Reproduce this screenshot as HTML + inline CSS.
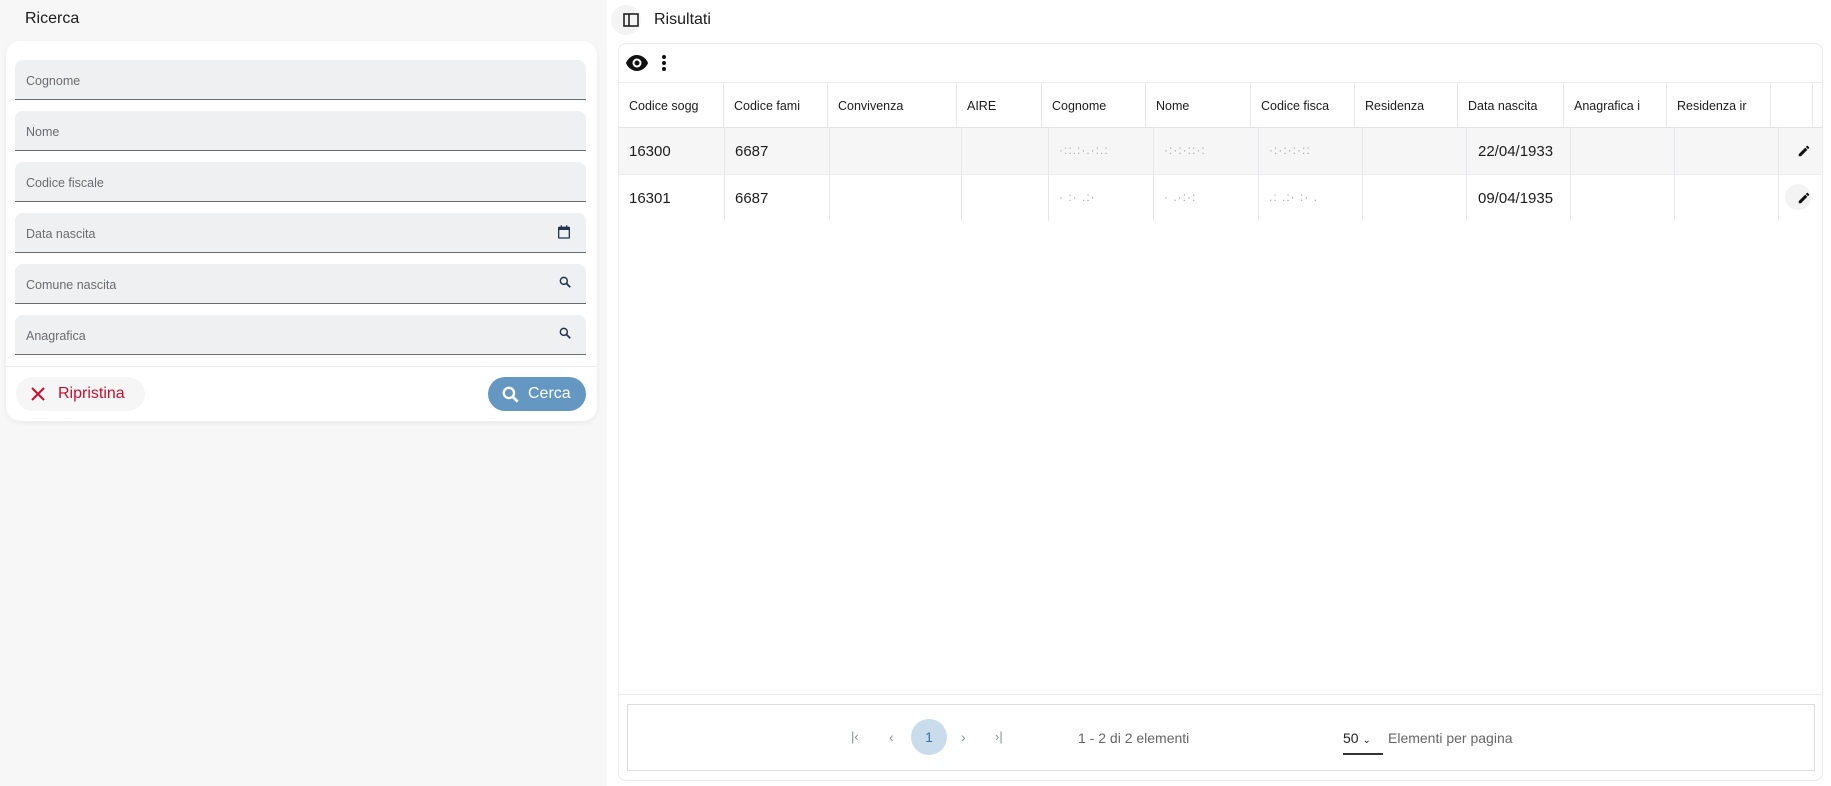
<!DOCTYPE html>
<html><head><meta charset="utf-8"><style>
*{box-sizing:border-box;margin:0;padding:0}
body{width:1831px;height:786px;overflow:hidden;font-family:"Liberation Sans",sans-serif;background:#fff;position:relative;color:#1c1c1c}
.abs{position:absolute}
.left{left:0;top:0;width:607px;height:786px;background:#f7f7f7}
.card{left:6px;top:41px;width:591px;height:380px;background:#fff;border-radius:14px;box-shadow:0 2px 6px rgba(0,0,0,.06)}
.field{left:15px;width:571px;height:40px;background:#eff0f2;border-radius:8px 8px 0 0;border-bottom:1.5px solid #6b6b6b;font-size:12.5px;color:#6c6c70;padding:14px 0 0 11px}
.fi{position:absolute;right:14px;top:11px}
.th{position:absolute;top:83px;height:44px;border-right:1px solid #e8e8ea;font-size:12.5px;padding:16px 0 0 10px;overflow:hidden;white-space:nowrap}
.td{position:absolute;height:47px;border-right:1px solid #e8e8ea;font-size:15px;padding:16px 0 0 10px}
.blur{color:#aaa;font-size:12px;letter-spacing:1px}
</style></head><body>
<div class="abs left"></div>
<div class="abs" style="left:25px;top:10px;font-size:16px;">Ricerca</div>
<div class="abs card"></div>
<div class="abs field" style="top:60px">Cognome</div>
<div class="abs field" style="top:111px">Nome</div>
<div class="abs field" style="top:162px">Codice fiscale</div>
<div class="abs field" style="top:213px">Data nascita<svg class="fi" width="16" height="16" viewBox="0 0 24 24"><path d="M5 4h14a2 2 0 0 1 2 2v14a2 2 0 0 1-2 2H5a2 2 0 0 1-2-2V6a2 2 0 0 1 2-2zM5 9v11h14V9z" fill="#1f3550"/><rect x="7" y="2" width="2" height="4" fill="#1f3550"/><rect x="15" y="2" width="2" height="4" fill="#1f3550"/></svg></div>
<div class="abs field" style="top:264px">Comune nascita<svg class="fi" width="14" height="14" viewBox="0 0 24 24"><circle cx="10" cy="10" r="6" fill="none" stroke="#1f3550" stroke-width="2.5"/><path d="M14.5 14.5L21 21" stroke="#1f3550" stroke-width="3"/></svg></div>
<div class="abs field" style="top:315px">Anagrafica<svg class="fi" width="14" height="14" viewBox="0 0 24 24"><circle cx="10" cy="10" r="6" fill="none" stroke="#1f3550" stroke-width="2.5"/><path d="M14.5 14.5L21 21" stroke="#1f3550" stroke-width="3"/></svg></div>
<div class="abs" style="left:6px;top:366px;width:591px;height:1px;background:#ececec"></div>
<div class="abs" style="left:16px;top:377px;width:129px;height:34px;border-radius:17px;background:#f6f6f6;color:#c8102e;font-size:16px;padding:8px 0 0 42px">Ripristina<svg class="abs" style="left:15px;top:10px" width="14" height="14" viewBox="0 0 14 14"><path d="M1 1L13 13M13 1L1 13" stroke="#c8102e" stroke-width="2"/></svg></div>
<div class="abs" style="left:488px;top:377px;width:98px;height:34px;border-radius:17px;background:#6497c2;color:#fff;font-size:16px;padding:8px 0 0 40px">Cerca<svg class="abs" style="left:13px;top:8px" width="19" height="19" viewBox="0 0 24 24"><circle cx="10" cy="10" r="6.5" fill="none" stroke="#fff" stroke-width="3"/><path d="M14.5 14.5L21 21" stroke="#fff" stroke-width="3.5"/></svg></div>

<div class="abs" style="left:611px;top:5px;width:30px;height:30px;border-radius:15px;background:#f4f4f4"></div>
<svg class="abs" style="left:623px;top:13px" width="16" height="14" viewBox="0 0 16 14"><rect x="1" y="1" width="14" height="12" fill="none" stroke="#222" stroke-width="1.6"/><path d="M6 1v12" stroke="#222" stroke-width="1.6"/></svg>
<div class="abs" style="left:654px;top:11px;font-size:16px">Risultati</div>

<div class="abs" style="left:618px;top:43px;width:1205px;height:738px;border:1px solid #ebebeb;border-radius:8px"></div>
<svg class="abs" style="left:625px;top:54px" width="24" height="18" viewBox="0 0 24 18"><path d="M12 1C6 1 2 6 1 9c1 3 5 8 11 8s10-5 11-8c-1-3-5-8-11-8z" fill="#111"/><circle cx="12" cy="9" r="4.5" fill="#fff"/><circle cx="12" cy="9" r="2.5" fill="#111"/></svg>
<div class="abs" style="left:662px;top:55px;width:4px;height:4px;border-radius:2px;background:#111;box-shadow:0 6px 0 #111,0 12px 0 #111"></div>
<div class="abs" style="left:619px;top:82px;width:1203px;height:1px;background:#ececec"></div>
<div class="abs" style="left:619px;top:127px;width:1203px;height:47px;background:#f6f6f6"></div>
<div class="abs" style="left:619px;top:127px;width:1203px;height:1px;background:#e3e3e3"></div>
<div class="abs" style="left:619px;top:174px;width:1203px;height:1px;background:#ececec"></div>

<div class="th" style="left:619px;width:105px">Codice sogg</div>
<div class="th" style="left:724px;width:104px">Codice fami</div>
<div class="th" style="left:828px;width:129px">Convivenza</div>
<div class="th" style="left:957px;width:85px">AIRE</div>
<div class="th" style="left:1042px;width:104px">Cognome</div>
<div class="th" style="left:1146px;width:105px">Nome</div>
<div class="th" style="left:1251px;width:104px">Codice fisca</div>
<div class="th" style="left:1355px;width:103px">Residenza</div>
<div class="th" style="left:1458px;width:106px">Data nascita</div>
<div class="th" style="left:1564px;width:103px">Anagrafica i</div>
<div class="th" style="left:1667px;width:104px">Residenza ir</div>
<div class="th" style="left:1771px;width:42px"></div>

<div class="td" style="left:619px;top:127px;width:106px">16300</div>
<div class="td" style="left:725px;top:127px;width:105px">6687</div>
<div class="td" style="left:830px;top:127px;width:132px"></div>
<div class="td" style="left:962px;top:127px;width:87px"></div>
<div class="td blur" style="left:1049px;top:127px;width:105px">·::.:·.·:.:</div>
<div class="td blur" style="left:1154px;top:127px;width:105px">·:·:·::·:</div>
<div class="td blur" style="left:1259px;top:127px;width:104px">·:·:·:·::</div>
<div class="td" style="left:1363px;top:127px;width:104px"></div>
<div class="td" style="left:1467px;top:127px;width:104px;padding-left:11px">22/04/1933</div>
<div class="td" style="left:1571px;top:127px;width:104px"></div>
<div class="td" style="left:1675px;top:127px;width:104px"></div>

<div class="td" style="left:619px;top:174px;width:106px">16301</div>
<div class="td" style="left:725px;top:174px;width:105px">6687</div>
<div class="td" style="left:830px;top:174px;width:132px"></div>
<div class="td" style="left:962px;top:174px;width:87px"></div>
<div class="td blur" style="left:1049px;top:174px;width:105px">· :· .:·</div>
<div class="td blur" style="left:1154px;top:174px;width:105px">· .·:·:</div>
<div class="td blur" style="left:1259px;top:174px;width:104px">.: .:· :· .</div>
<div class="td" style="left:1363px;top:174px;width:104px"></div>
<div class="td" style="left:1467px;top:174px;width:104px;padding-left:11px">09/04/1935</div>
<div class="td" style="left:1571px;top:174px;width:104px"></div>
<div class="td" style="left:1675px;top:174px;width:104px"></div>

<svg class="abs" style="left:1797px;top:144px" width="14" height="14" viewBox="0 0 24 24"><path d="M3 17.25V21h3.75L17.81 9.94l-3.75-3.75zM20.71 7.04a1 1 0 0 0 0-1.41l-2.34-2.34a1 1 0 0 0-1.41 0l-1.83 1.83 3.75 3.75z" fill="#111"/></svg>
<div class="abs" style="left:1785px;top:184px;width:26px;height:26px;border-radius:13px;background:#f3f3f3"></div>
<svg class="abs" style="left:1797px;top:191px" width="14" height="14" viewBox="0 0 24 24"><path d="M3 17.25V21h3.75L17.81 9.94l-3.75-3.75zM20.71 7.04a1 1 0 0 0 0-1.41l-2.34-2.34a1 1 0 0 0-1.41 0l-1.83 1.83 3.75 3.75z" fill="#111"/></svg>

<div class="abs" style="left:619px;top:694px;width:1203px;height:1px;background:#ebebeb"></div>
<div class="abs" style="left:627px;top:704px;width:1188px;height:67px;border:1px solid #dedede"></div>
<div class="abs" style="left:851px;top:729px;font-size:13px;color:#8a9099">|‹</div>
<div class="abs" style="left:889px;top:729px;font-size:14px;color:#8a9099">‹</div>
<div class="abs" style="left:911px;top:719px;width:36px;height:36px;border-radius:18px;background:#c9dcec;color:#3d6f9a;font-size:14px;text-align:center;line-height:37px">1</div>
<div class="abs" style="left:961px;top:729px;font-size:14px;color:#8a9099">›</div>
<div class="abs" style="left:995px;top:729px;font-size:13px;color:#8a9099">›|</div>
<div class="abs" style="left:1078px;top:730px;font-size:14px;color:#666">1 - 2 di 2 elementi</div>
<div class="abs" style="left:1343px;top:730px;font-size:14px;color:#222">50 <span style="font-size:10px">&#8964;</span></div>
<div class="abs" style="left:1343px;top:753px;width:40px;height:1.5px;background:#333"></div>
<div class="abs" style="left:1388px;top:730px;font-size:14px;color:#666">Elementi per pagina</div>
</body></html>
